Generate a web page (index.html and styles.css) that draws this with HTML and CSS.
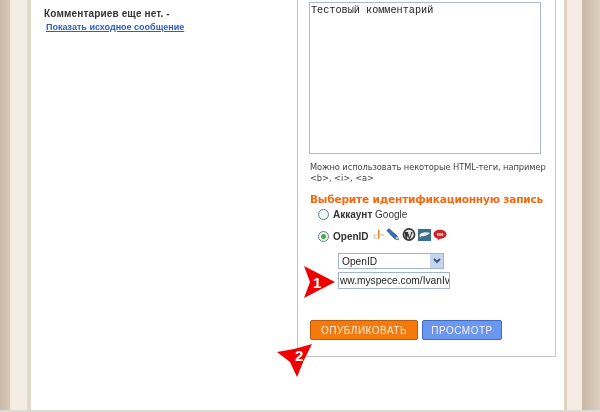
FILE: index.html
```html
<!DOCTYPE html>
<html lang="ru">
<head>
    <meta charset="UTF-8">
    <meta name="viewport" content="width=device-width, initial-scale=1.0">
    <title>Комментарий</title>
    <link rel="stylesheet" href="styles.css">
</head>
<body>
<div class="page">
    <div class="band band-left"></div>
    <main class="content">
        <div class="comments">
            <p class="no-comments">Комментариев еще нет. -</p>
            <a class="show-post" href="#">Показать исходное сообщение</a>
        </div>
        <form class="comment-form">
            <textarea class="comment-text" spellcheck="false">Тестовый комментарий</textarea>
            <p class="hint">Можно использовать некоторые HTML-теги, например<br>&lt;b&gt;, &lt;i&gt;, &lt;a&gt;</p>
            <h3 class="identity-title">Выберите идентификационную запись</h3>
            <div class="identity-row google-row">
                <span class="radio"></span>
                <span class="identity-label"><b>Аккаунт</b> Google</span>
            </div>
            <div class="identity-row openid-row">
                <span class="radio radio-on"></span>
                <span class="identity-label">OpenID</span>
                <span class="identity-icons">
                    <!-- openid -->
                    <svg width="11" height="12" viewBox="0 0 11 12"><path d="M5 1v9l1.500-.8V.3z" fill="#f58220"/><path d="M4.500 4.500C2 5 .5 6 .5 7.500s1.600 2.600 4 3V9.400C3 9 2 8.400 2 7.500s1-1.500 2.500-1.900zM7.500 4.500c1 .1 1.800.4 2.500.8l.8-.4v2l-3-.6.8-.4c-.4-.2-.7-.3-1.100-.4z" fill="#d0ccc4"/></svg>
                    <!-- pencil -->
                    <svg width="14" height="13" viewBox="0 0 14 13"><path d="M1 2.500L3 .8l8.500 7.700.9 3.300-3.500-.9z" fill="#2f74c4" stroke="#123f7a" stroke-width=".8"/><path d="M9.200 10.300l2.200-1.900 1 3.400z" fill="#eee0c4"/></svg>
                    <!-- wordpress -->
                    <svg width="14" height="13" viewBox="0 0 14 13"><circle cx="7" cy="6.500" r="6.400" fill="#3a3a3a"/><circle cx="7" cy="6.500" r="4.700" fill="#e6e6e6"/><path d="M3.300 4h2.600l1.700 5.500L9 5c.2-.5 0-.9-.4-1h2L8 11H7L5.800 7.700 4.700 11h-.8L2.300 4z" fill="#333"/></svg>
                    <!-- typepad-like -->
                    <svg width="13" height="12" viewBox="0 0 13 12"><rect width="13" height="12" fill="#3c6e8f"/><path d="M1.500 6C3 3.500 8 2.500 12 4 10 6.500 6 7.500 3.500 7L2 9z" fill="#f4f4f4"/></svg>
                    <!-- aol-like -->
                    <svg width="14" height="12" viewBox="0 0 14 12"><path d="M7 .8c3.500 0 6.500 1.900 6.500 4.500S10.500 9.800 7 9.800L4.800 11.500V9.500C2.200 9 .5 7.400.5 5.300.5 2.700 3.500.8 7 .8z" fill="#cf2027"/><path d="M4 4h1.500v3H4zM6.300 4h1.500v3H6.300zM8.600 4h1.500v3H8.600z" fill="#f7d7d7"/></svg>
                </span>
            </div>
            <div class="openid-fields">
                <div class="fake-select">
                    <span>OpenID</span>
                    <span class="select-arrow">
                        <svg width="8" height="6" viewBox="0 0 8 6"><path d="M1 1l3 3 3-3" fill="none" stroke="#34507f" stroke-width="1.800"/></svg>
                    </span>
                </div>
                <div class="url-field">ww.myspece.com/IvanIv</div>
            </div>
            <div class="buttons">
                <button type="button" class="btn btn-orange">ОПУБЛИКОВАТЬ</button>
                <button type="button" class="btn btn-blue">ПРОСМОТР</button>
            </div>
        </form>
    </main>
    <div class="band band-right"></div>
</div>

<!-- стрелки поверх скриншота -->
<div class="marker marker-one">
    <svg width="32" height="34" viewBox="0 0 32 34"><path d="M0 0L31 16 0 32 6 16z" fill="#f00000"/></svg>
    <span>1</span>
</div>
<div class="marker marker-two">
    <svg width="38" height="35" viewBox="0 0 38 35"><path d="M36 1L28 17 21 34 14 19 1 9 18 6z" fill="#f00000"/></svg>
    <span>2</span>
</div>
</body>
</html>
```

FILE: styles.css
```css
body, html {
    margin: 0;
    padding: 0;
    width: 600px;
    height: 412px;
    overflow: hidden;
    background-color: #fff;
    font-family: "Liberation Sans", sans-serif;
}

.page {
    display: flex;
    height: 410px;
    border-bottom: 2px solid #dddcd4;
}

.band-left {
    width: 31px;
    background: linear-gradient(to right, #cbbba8 0, #d7c9b7 10px, #f0e6da 10px, #f0e6da 11px, #f5ece3 11px, #f5ece3 27px, #e2d9c8 27px);
}

.band-right {
    width: 36px;
    background: linear-gradient(to right, #ddd3c0 0, #ddd3c0 3px, #f5ece3 3px, #f5ece3 18px, #c8b8a6 18px, #dccfbe 36px);
}

.content {
    flex: 1;
    display: flex;
    align-items: flex-start;
    filter: blur(0.35px);
}

.comments {
    width: 253px;
    padding: 8px 0 0 13px;
}

.no-comments {
    margin: 0 0 1px 0;
    font-size: 10px;
    font-weight: bold;
    color: #333;
    line-height: 12px;
    letter-spacing: 0.15px;
}

.show-post {
    display: block;
    margin-left: 2px;
    font-size: 9px;
    font-weight: bold;
    color: #2a60c8;
    line-height: 12px;
}

.comment-form {
    height: 357px;
    box-sizing: border-box;
    width: 259px;
    padding: 2px 0 0 12px;
    border: 1px solid #c6c6c6;
    border-top: none;
}

.comment-text {
    display: block;
    box-sizing: border-box;
    width: 232px;
    height: 152px;
    margin: 0 0 0 -1px;
    padding: 2px 1px;
    border: 1px solid #a9bdd0;
    resize: none;
    overflow: hidden;
    font-family: "Liberation Mono", monospace;
    font-size: 10.200px;
    color: #222;
    outline: none;
}

.hint {
    margin: 8px 0 0 0;
    font-size: 8.300px;
    line-height: 11px;
    color: #444;
    white-space: nowrap;
    font-family: "DejaVu Sans", sans-serif;
    letter-spacing: -0.08px;
}

.identity-title {
    margin: 8px 0 0 0;
    font-size: 10.600px;
    font-weight: bold;
    line-height: 14px;
    color: #f46a12;
    white-space: nowrap;
    font-family: "DejaVu Sans", sans-serif;
    letter-spacing: -0.2px;
}

.identity-row {
    display: flex;
    align-items: center;
    padding-left: 8px;
    font-size: 10px;
    color: #333;
}

.google-row {
    margin-top: 1px;
    height: 14px;
}

.openid-row {
    margin-top: 8px;
    height: 14px;
}

.identity-label {
    margin-left: 4px;
}

.openid-row .identity-label {
    font-weight: bold;
}

.radio {
    width: 9px;
    height: 9px;
    border: 1px solid #5a7ea6;
    border-radius: 50%;
    background-color: #f6f6f2;
    display: flex;
    align-items: center;
    justify-content: center;
}

.radio-on::after {
    content: "";
    width: 5px;
    height: 5px;
    border-radius: 50%;
    background-color: #3cb43c;
}

.identity-icons {
    display: flex;
    align-items: center;
    gap: 2px;
    margin-left: 4px;
    margin-bottom: 3px;
}

.openid-fields {
    margin: 10px 0 0 28px;
}

.fake-select {
    box-sizing: border-box;
    width: 106px;
    height: 16px;
    padding-left: 3px;
    border: 1px solid #9fb6cc;
    display: flex;
    align-items: center;
    justify-content: space-between;
    font-size: 10.200px;
    color: #222;
}

.select-arrow {
    width: 13px;
    height: 14px;
    background-color: #c4d5ee;
    display: flex;
    align-items: center;
    justify-content: center;
}

.url-field {
    box-sizing: border-box;
    width: 112px;
    height: 17px;
    margin-top: 3px;
    padding-left: 1px;
    border: 1px solid #9fb6cc;
    overflow: hidden;
    white-space: nowrap;
    font-size: 10.200px;
    line-height: 15px;
    color: #222;
}

.buttons {
    display: flex;
    gap: 4px;
    margin-top: 31px;
}

.btn {
    height: 20px;
    padding: 0;
    border-radius: 2px;
    font-family: "Liberation Sans", sans-serif;
    font-size: 10px;
    color: #f8eee4;
    letter-spacing: 0.5px;
}

.btn-orange {
    width: 108px;
    background-color: #f57a0c;
    border: 1px solid #b85a10;
}

.btn-blue {
    width: 80px;
    background-color: #6a98f0;
    border: 1px solid #3f6cc0;
}

.marker {
    position: absolute;
}

.marker span {
    position: absolute;
    color: #fff;
    font-family: "Liberation Sans", sans-serif;
    font-size: 15px;
    font-weight: bold;
    line-height: 15px;
}

.marker svg {
    display: block;
}

.marker-one {
    left: 304px;
    top: 266px;
}

.marker-one span {
    left: 9px;
    top: 9px;
}

.marker-two {
    left: 276px;
    top: 343px;
}

.marker-two span {
    left: 19px;
    top: 5px;
}
```
